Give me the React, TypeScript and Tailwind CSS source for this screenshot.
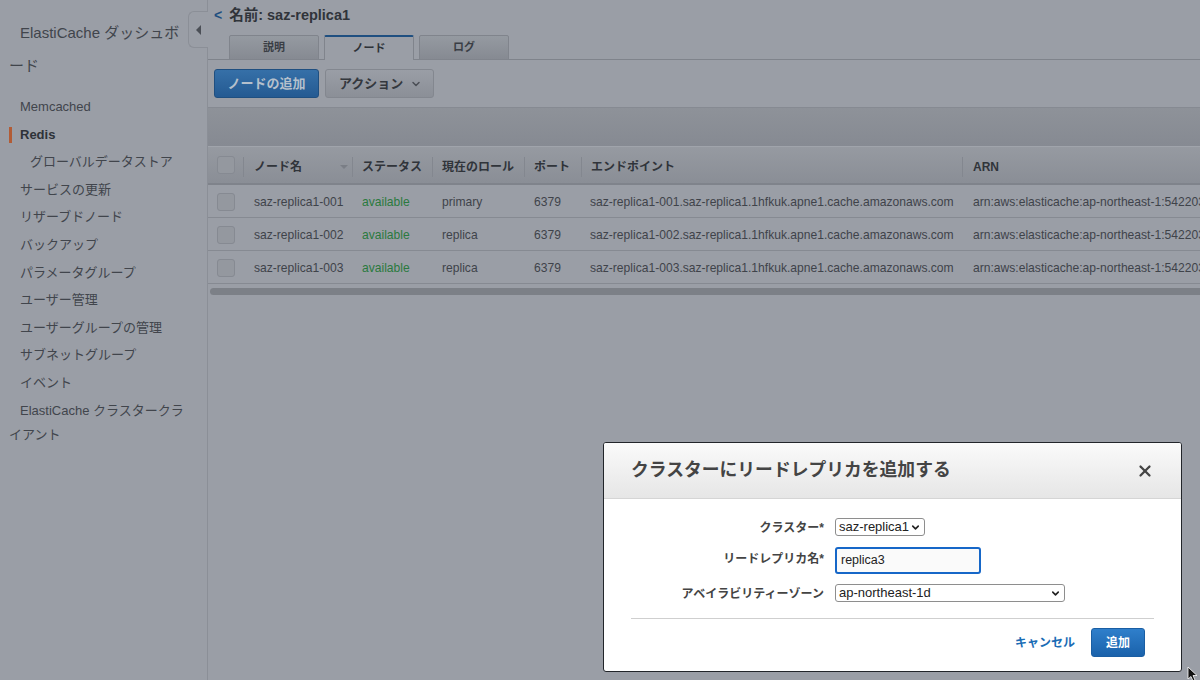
import type { ReactNode } from 'react';
import { ChevronDown, X } from 'lucide-react';

const navItems = [
  { label: 'Memcached' },
  { label: 'Redis', active: true },
  { label: 'グローバルデータストア', sub: true },
  { label: 'サービスの更新' },
  { label: 'リザーブドノード' },
  { label: 'バックアップ' },
  { label: 'パラメータグループ' },
  { label: 'ユーザー管理' },
  { label: 'ユーザーグループの管理' },
  { label: 'サブネットグループ' },
  { label: 'イベント' },
];

const nodes = [
  { name: 'saz-replica1-001', role: 'primary' },
  { name: 'saz-replica1-002', role: 'replica' },
  { name: 'saz-replica1-003', role: 'replica' },
];

function Checkbox() {
  return <div className="h-[18px] w-[18px] rounded-[3px] border border-[#868a92] bg-[#94989f]" />;
}

function HeaderCell({ children, className }: { children: ReactNode; className: string }) {
  return (
    <div className={`flex h-full shrink-0 items-center ${className}`}>
      <div className="mt-[3px] flex h-[20px] w-full items-center border-l border-[#83878f] pl-[9px] text-[12px] font-bold text-[#30343a]">
        {children}
      </div>
    </div>
  );
}

function Row({ name, role, index }: { name: string; role: string; index: number }) {
  return (
    <div className="flex h-[33px] items-center border-b border-[#868a92] text-[12.1px] text-[#3f434a]">
      <div className="flex w-[35px] shrink-0 justify-center pl-[1px] pt-[1px]"><Checkbox /></div>
      <div className="flex w-[1019px] shrink-0 items-center pt-[2px]">
        <div className="w-[109px] shrink-0 pl-[11px]">{name}</div>
        <div className="w-[80px] shrink-0 pl-[10px] text-[#2a7a3e]">available</div>
        <div className="w-[92px] shrink-0 pl-[10px]">{role}</div>
        <div className="w-[57px] shrink-0 pl-[10px]">6379</div>
        <div className="w-[381px] shrink-0 whitespace-nowrap pl-[9px]">{`saz-replica1-00${index + 1}.saz-replica1.1hfkuk.apne1.cache.amazonaws.com`}</div>
        <div className="w-[300px] shrink-0 overflow-hidden whitespace-nowrap pl-[11px]">arn:aws:elasticache:ap-northeast-1:542203</div>
      </div>
    </div>
  );
}

export default function App() {
  return (
    <div className="relative flex h-[680px] w-[1200px] overflow-hidden bg-[#9a9ea6] font-['Liberation_Sans','Noto_Sans_CJK_JP',sans-serif]">
      {/* Sidebar */}
      <aside className="w-[208px] shrink-0 border-r border-[#8b8f97] pl-[9px] text-[#41454c]">
        <div className="mt-[16px] pr-[24px] text-[15px] leading-[33px] indent-[11px]">ElastiCache ダッシュボード</div>
        <nav className="mt-[11px] text-[13px]">
          {navItems.map((item) => (
            <div key={item.label} className={`relative flex h-[27.6px] items-center ${item.sub ? 'pl-[21px]' : 'pl-[11px]'} ${item.active ? 'font-bold text-[#2e3238]' : ''}`}>
              {item.active && <span className="absolute left-0 top-[6px] h-[16px] w-[3px] bg-[#b25c36]" />}
              {item.label}
            </div>
          ))}
          <div className="mt-[2px] pr-[20px] leading-[24px] indent-[11px]">ElastiCache クラスタークライアント</div>
        </nav>
      </aside>

      {/* Collapse handle */}
      <div className="absolute left-[188px] top-[11px] flex h-[37px] w-[20px] items-center justify-center rounded-l-[6px] border border-r-0 border-[#8b8f97] bg-[#9a9ea6]">
        <span className="h-0 w-0 border-y-[5px] border-r-[5px] border-y-transparent border-r-[#4b4f56]" />
      </div>

      {/* Main */}
      <main className="min-w-0 flex-1">
        <div className="flex h-[35px] items-start pl-[6px] pt-[4px]">
          <span className="mr-[7px] text-[14px] font-bold leading-[22px] text-[#1f4f80]">&lt;</span>
          <span className="text-[14.5px] font-bold leading-[22px] text-[#30343a]">名前: saz-replica1</span>
        </div>

        <div className="flex h-[25px] gap-[5px] border-b border-[#7f838b] pl-[21px]">
          <div className="flex h-[25px] w-[90px] items-center justify-center rounded-t-[2px] border border-[#80848c] bg-gradient-to-b from-[#959aa1] to-[#868a92] text-[11px] font-bold text-[#3a3e45]">説明</div>
          <div className="z-10 flex h-[25px] w-[90px] items-center justify-center rounded-t-[2px] border-x border-t-2 border-x-[#80848c] border-t-[#1f4f80] bg-[#9a9ea6] text-[11px] font-bold text-[#2e3238]">ノード</div>
          <div className="flex h-[25px] w-[90px] items-center justify-center rounded-t-[2px] border border-[#80848c] bg-gradient-to-b from-[#959aa1] to-[#868a92] text-[11px] font-bold text-[#3a3e45]">ログ</div>
        </div>

        <div className="flex h-[48px] items-start gap-[6px] border-b border-[#868a92] pl-[6px] pt-[9px]">
          <button className="h-[29px] w-[105px] rounded-[3px] border border-[#1f4f80] bg-gradient-to-b from-[#3670a8] to-[#245a92] text-[13px] font-bold text-[#b5c0cc]">ノードの追加</button>
          <button className="flex h-[29px] w-[109px] items-center gap-[7px] rounded-[3px] border border-[#83878f] bg-gradient-to-b from-[#9a9ea6] to-[#8b8f97] pl-[13px] text-[13px] font-bold text-[#34383e]">
            アクション
            <ChevronDown size={12} strokeWidth={3} className="text-[#4b4f56]" />
          </button>
        </div>

        <div className="h-[39px] border-b border-[#a0a4ab] bg-gradient-to-b from-[#8e9299] to-[#868a92]" />

        {/* Table */}
        <div className="w-[992px] overflow-hidden">
          <div className="flex h-[38px] items-center border-b-2 border-[#7f838b] bg-gradient-to-b from-[#969aa1] to-[#8a8e96]">
            <div className="flex w-[35px] shrink-0 justify-center pl-[1px]"><Checkbox /></div>
            <HeaderCell className="w-[109px]">
              <span className="flex-1 pl-[1px]">ノード名</span>
              <span className="mr-[4px] h-0 w-0 border-x-[4px] border-t-[4px] border-x-transparent border-t-[#7a7e86]" />
            </HeaderCell>
            <HeaderCell className="w-[80px]">ステータス</HeaderCell>
            <HeaderCell className="w-[92px]">現在のロール</HeaderCell>
            <HeaderCell className="w-[57px]">ポート</HeaderCell>
            <HeaderCell className="w-[381px]">エンドポイント</HeaderCell>
            <HeaderCell className="w-[300px]"><span className="pl-[1px]">ARN</span></HeaderCell>
          </div>
          {nodes.map((n, i) => (
            <Row key={n.name} name={n.name} role={n.role} index={i} />
          ))}
        </div>
        <div className="ml-[2px] mt-[4px] h-[7px] rounded-l-[4px] bg-[#7c8087]" />
      </main>

      {/* Modal */}
      <div className="absolute left-[603px] top-[442px] h-[230px] w-[579px] overflow-hidden rounded-[3px] border border-[#22252a] bg-white">
        <div className="flex h-[56px] items-center justify-between border-b border-[#d5d5d5] bg-gradient-to-b from-[#fafafa] to-[#e6e6e6] pl-[27px] pr-[27px]">
          <span className="text-[17.8px] font-bold text-[#444]">クラスターにリードレプリカを追加する</span>
          <X size={18} strokeWidth={3} className="text-[#444]" />
        </div>
        <div className="grid grid-cols-[220px_1fr] items-center gap-x-[11px] pt-[19px]">
          <label className="translate-y-[1px] text-right text-[12px] font-bold text-[#444]">クラスター*</label>
          <div className="flex h-[18px] w-[90px] items-center justify-between rounded-[3px] border border-[#8e8e8e] px-[3px] text-[13px] text-[#222]">
            saz-replica1
            <ChevronDown size={11} strokeWidth={3.5} className="shrink-0 text-[#222]" />
          </div>
          <label className="mb-[10px] mt-[11px] -translate-y-[2px] text-right text-[12px] font-bold text-[#444]">リードレプリカ名*</label>
          <div className="mb-[10px] mt-[11px] flex h-[27px] w-[146px] items-center rounded-[3px] border-2 border-[#1667c8] bg-[#fafafa] pl-[4px] text-[12.5px] text-[#222]">replica3</div>
          <label className="translate-y-[1px] text-right text-[12px] font-bold text-[#444]">アベイラビリティーゾーン</label>
          <div className="flex h-[18px] w-[230px] items-center justify-between rounded-[3px] border border-[#8e8e8e] px-[3px] text-[13px] text-[#222]">
            ap-northeast-1d
            <ChevronDown size={11} strokeWidth={3.5} className="shrink-0 text-[#222]" />
          </div>
        </div>
        <div className="mx-[27px] mt-[16px] border-t border-[#cfcfcf]" />
        <div className="flex items-center justify-end gap-[16px] pr-[36px] pt-[9px]">
          <span className="text-[12px] font-bold text-[#1a6cb5]">キャンセル</span>
          <button className="h-[29px] w-[54px] rounded-[3px] border border-[#1a5ea3] bg-gradient-to-b from-[#2f7fcb] to-[#1a62ab] text-[12px] font-bold text-white">追加</button>
        </div>
      </div>

      {/* Mouse pointer */}
      <svg className="absolute left-[1187px] top-[666px]" width="13" height="16" viewBox="0 0 13 16">
        <path d="M1 1 L1 13 L4 10.5 L6 15 L8 14 L6 9.5 L10 9.5 Z" fill="#111" stroke="#fff" strokeWidth="0.8" />
      </svg>
    </div>
  );
}
